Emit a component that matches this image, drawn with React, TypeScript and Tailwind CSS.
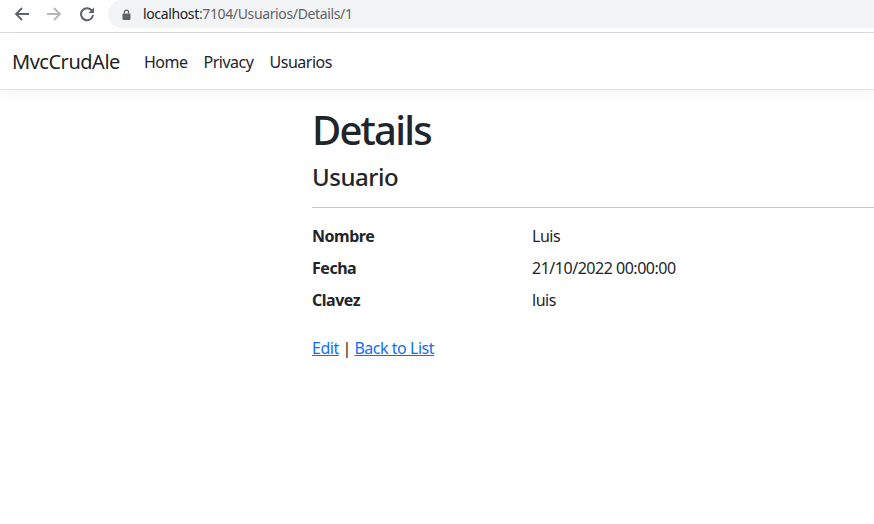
export default function App() {
  const links = ['Home', 'Privacy', 'Usuarios'];

  return (
    <div className="min-h-[524px] bg-white font-['Noto_Sans',sans-serif] tracking-[-0.03em] text-[#212529]">
      {/* browser chrome */}
      <div className="flex h-[33px] items-start border-b border-[#dadce0] bg-white">
        <div className="flex h-[28px] items-center">
          <svg className="ml-[14px] h-4 w-4" viewBox="0 0 16 16" fill="none" stroke="#5f6368" strokeWidth="1.8">
            <path d="M15 8H2M8 2L2 8l6 6" />
          </svg>
          <svg className="ml-[16px] h-4 w-4" viewBox="0 0 16 16" fill="none" stroke="#b4b6b9" strokeWidth="1.8">
            <path d="M1 8h13M8 2l6 6-6 6" />
          </svg>
          <svg className="ml-[17px] h-4 w-4" viewBox="0 0 16 16" fill="none">
            <path d="M13.2 5.2A6 6 0 1 0 14 9" stroke="#5f6368" strokeWidth="2" />
            <path d="M15 1.5V7H9.5z" fill="#5f6368" />
          </svg>
        </div>
        <div className="ml-[13px] flex h-[28px] flex-1 items-center rounded-l-full bg-[#f1f3f4] pl-[14px]">
          <svg className="h-[11px] w-[9px]" viewBox="0 0 9 11" fill="#5f6368">
            <path d="M1.8 4.5V3.2a2.7 2.7 0 0 1 5.4 0v1.3H6V3.2a1.5 1.5 0 0 0-3 0v1.3z" />
            <rect x="0.5" y="4.5" width="8" height="6.5" rx="1" />
          </svg>
          <span className="ml-[12px] text-[14px] leading-none tracking-[-0.026em]">
            <span className="text-[#202124]">localhost</span>
            <span className="text-[#5f6368]">:7104/Usuarios/Details/1</span>
          </span>
        </div>
      </div>

      {/* navbar */}
      <nav className="flex h-[57px] items-center border-b border-[#e4e4e4] bg-white px-3 pt-[2px] shadow-[0_4px_12px_rgba(0,0,0,0.05)]">
        <span className="mr-4 text-[20px] text-black/90">MvcCrudAle</span>
        <ul className="flex">
          {links.map((l) => (
            <li key={l} className="px-2 text-[16px] text-[#212529]">
              {l}
            </li>
          ))}
        </ul>
      </nav>

      {/* content */}
      <main className="ml-[312px] pt-4">
        <h1 className="mb-2 text-[40px] leading-[48px] font-medium tracking-[-0.045em]">Details</h1>
        <h4 className="text-[24px] leading-[29px] font-medium">Usuario</h4>
        <hr className="my-4 border-t border-[#c8c9ca]" />
        <dl className="mb-4 text-[16px] leading-6">
          {[
            ['Nombre', 'Luis'],
            ['Fecha', '21/10/2022 00:00:00'],
            ['Clavez', 'luis'],
          ].map(([k, v]) => (
            <div key={k} className="flex">
              <dt className="w-[220px] font-bold">{k}</dt>
              <dd className="mb-2">{v}</dd>
            </div>
          ))}
        </dl>
        <div className="text-[16px] leading-6">
          <a href="#" className="text-[#0d6efd] underline">Edit</a> |{' '}
          <a href="#" className="text-[#0d6efd] underline">Back to List</a>
        </div>
      </main>
    </div>
  );
}
